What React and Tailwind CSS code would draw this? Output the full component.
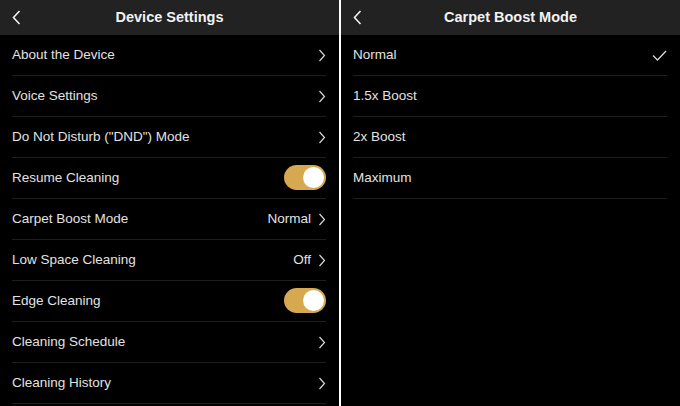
import { useState } from 'react'

function Chevron() {
  return (
    <svg width="8" height="13" viewBox="0 0 8 13" className="shrink-0">
      <path d="M1.5 1 L6.5 6.5 L1.5 12" fill="none" stroke="#d8d8d8" strokeWidth="1.2" />
    </svg>
  )
}

function BackArrow() {
  return (
    <svg width="9" height="15" viewBox="0 0 9 15">
      <path d="M7.5 1 L1.5 7.5 L7.5 14" fill="none" stroke="#f2f2f2" strokeWidth="1.6" />
    </svg>
  )
}

function Check() {
  return (
    <svg width="15" height="11" viewBox="0 0 15 11">
      <path d="M1 5.5 L5.5 10 L14 1" fill="none" stroke="#d8d8d8" strokeWidth="1.3" />
    </svg>
  )
}

function Toggle({ on }) {
  return (
    <div className={`w-[42px] h-[25px] -mt-[2px] rounded-full p-[2px] flex ${on ? 'bg-[#d6a84f] justify-end' : 'bg-[#3a3a3a] justify-start'}`}>
      <div className="w-[21px] h-[21px] rounded-full bg-white" />
    </div>
  )
}

function Header({ title }) {
  return (
    <div className="h-[35px] bg-[#222222] flex items-center relative shrink-0">
      <div className="absolute left-[12px] top-[10px]">
        <BackArrow />
      </div>
      <div className="flex-1 text-center text-[14.5px] font-semibold text-[#f2f2f2] pt-px">{title}</div>
    </div>
  )
}

function Row({ label, value, kind }) {
  return (
    <div className="h-[41px] pl-[12px] pr-[13px] flex flex-col">
      <div className="flex-1 flex items-center justify-between pt-px">
        <span className="text-[13.5px] text-[#e2e2e2]">{label}</span>
        <div className="flex items-center gap-[7px]">
          {value && <span className="text-[13.5px] text-[#e2e2e2]">{value}</span>}
          {kind === 'chevron' && <Chevron />}
          {kind === 'toggle' && <Toggle on />}
          {kind === 'check' && <Check />}
        </div>
      </div>
      <div className="h-px bg-[#1e1e1e]" />
    </div>
  )
}

const settings = [
  { label: 'About the Device', kind: 'chevron' },
  { label: 'Voice Settings', kind: 'chevron' },
  { label: 'Do Not Disturb ("DND") Mode', kind: 'chevron' },
  { label: 'Resume Cleaning', kind: 'toggle' },
  { label: 'Carpet Boost Mode', value: 'Normal', kind: 'chevron' },
  { label: 'Low Space Cleaning', value: 'Off', kind: 'chevron' },
  { label: 'Edge Cleaning', kind: 'toggle' },
  { label: 'Cleaning Schedule', kind: 'chevron' },
  { label: 'Cleaning History', kind: 'chevron' },
]

const modes = ['Normal', '1.5x Boost', '2x Boost', 'Maximum']

export default function App() {
  const [mode] = useState('Normal')
  return (
    <div className="w-[680px] h-[406px] flex bg-black overflow-hidden" style={{ fontFamily: '"Liberation Sans", Arial, sans-serif' }}>
      <div className="w-[339px] flex flex-col">
        <Header title="Device Settings" />
        {settings.map((s) => (
          <Row key={s.label} {...s} />
        ))}
      </div>
      <div className="w-[2px] bg-white" />
      <div className="flex-1 flex flex-col">
        <Header title="Carpet Boost Mode" />
        {modes.map((m) => (
          <Row key={m} label={m} kind={m === mode ? 'check' : null} />
        ))}
      </div>
    </div>
  )
}
